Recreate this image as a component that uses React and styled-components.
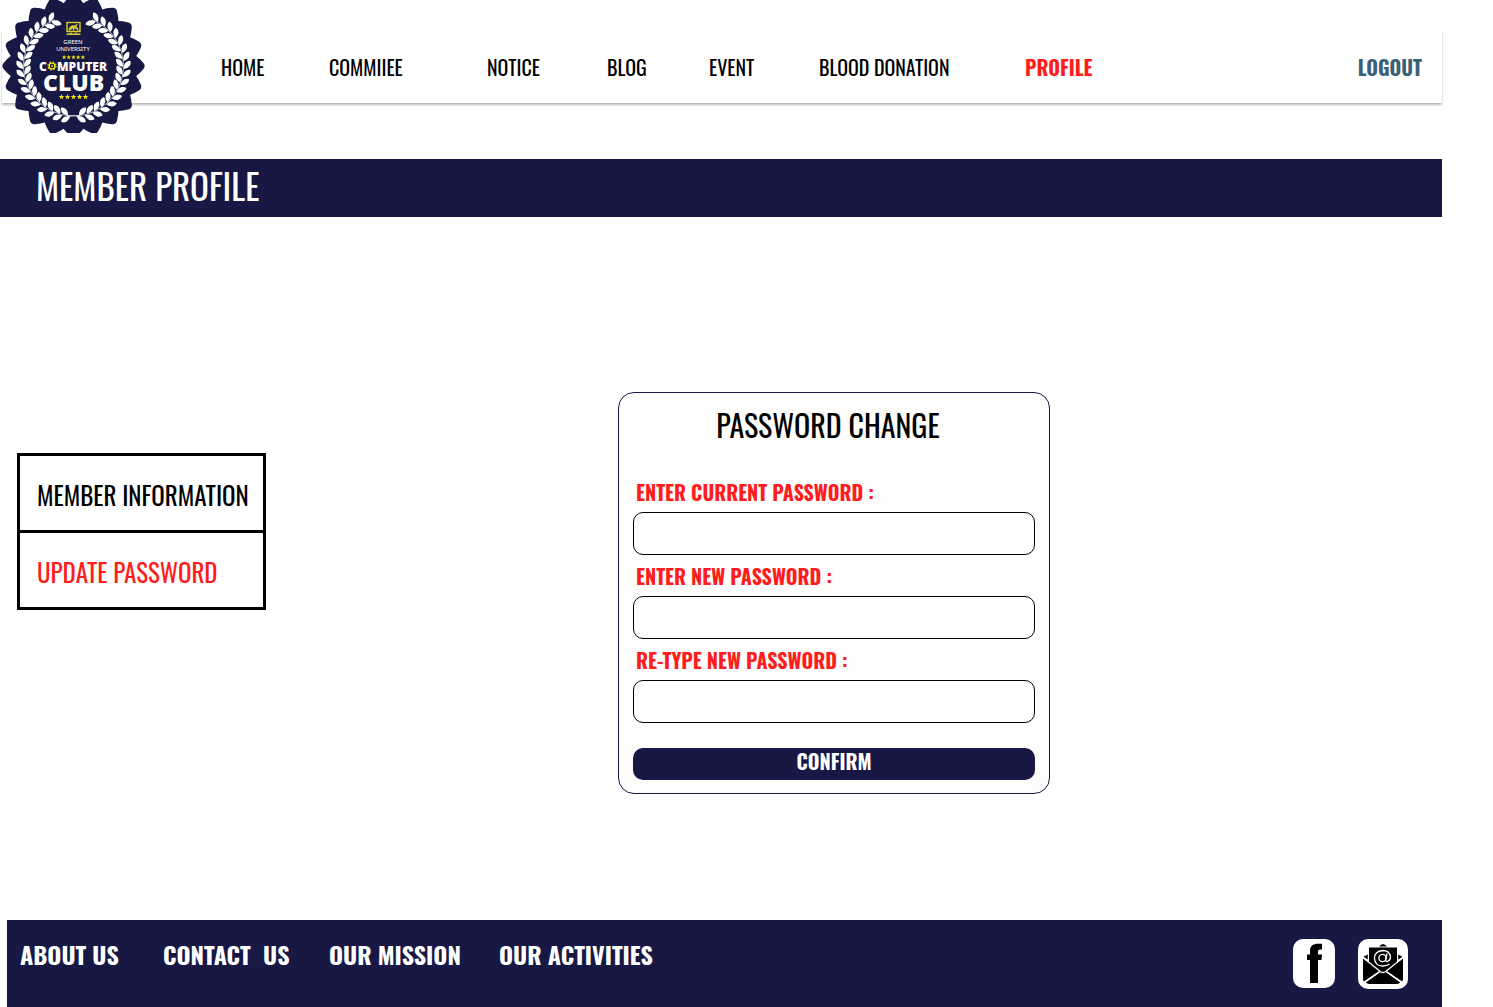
import React from "react";
import styled, { createGlobalStyle } from "styled-components";

const navy = "#171844";
const red = "#ff1c1c";

const GlobalStyle = createGlobalStyle`
  *, *::before, *::after { box-sizing: border-box; }
  body {
    margin: 0;
    background: #fff;
    color: #000;
    font-family: Oswald, "Roboto Condensed", sans-serif;
  }
`;

const Page = styled.div`
  display: flex;
  flex-direction: column;
  min-height: 100vh;
  padding: 29px 51px 0 0;
`;

const Header = styled.header`
  position: relative;
  display: flex;
  align-items: center;
  justify-content: space-between;
  height: 74px;
  margin-left: 2px;
  padding: 2px 20px 0 219px;
  box-shadow: 0 2px 2px rgba(0, 0, 0, 0.28);
`;

const LogoLink = styled.a`
  position: absolute;
  top: -29px;
  left: -2px;
  line-height: 0;
`;

const Nav = styled.nav`
  display: grid;
  grid-template-columns: 108px 158px 120px 102px 110px 206px auto;
`;

const NavLink = styled.a`
  color: ${(p) => p.$color || "#000"};
  font-size: 20px;
  font-weight: ${(p) => (p.$strong ? 700 : 400)};
  line-height: 30px;
  text-decoration: none;
  white-space: nowrap;
`;

const Banner = styled.h1`
  margin: 56px 0 0;
  padding: 0 36px 6px;
  background: ${navy};
  color: #fff;
  font-size: 35px;
  font-weight: 400;
  line-height: 52px;
`;

const Main = styled.main`
  display: grid;
  flex: 1;
  grid-template-columns: 249px minmax(0, 432px);
  column-gap: 352px;
  align-items: start;
  padding: 175px 0 126px 17px;
`;

const SideMenu = styled.nav`
  margin-top: 61px;
  border: 3px solid #000;
`;

const SideLink = styled.a`
  display: block;
  padding: 20px 0 16px 17px;
  color: ${(p) => (p.$active ? red : "#000")};
  font-size: 25px;
  font-weight: 400;
  line-height: 38px;
  text-decoration: none;
  white-space: nowrap;

  & + & {
    border-top: 3px solid #000;
  }
`;

const Card = styled.form`
  display: flex;
  flex-direction: column;
  padding: 10px 14px 13px;
  border: 1px solid ${navy};
  border-radius: 16px;
  background: #fffdfc;
`;

const CardTitle = styled.h2`
  margin: 0 0 30px;
  padding-right: 12px;
  font-size: 30px;
  font-weight: 400;
  line-height: 44px;
  text-align: center;
`;

const Fields = styled.div`
  display: grid;
  gap: 6px;
`;

const Field = styled.div`
  display: grid;
  gap: 5px;
`;

const Label = styled.label`
  padding-left: 3px;
  color: ${red};
  font-size: 20px;
  font-weight: 700;
  line-height: 30px;
`;

const Input = styled.input`
  width: 100%;
  height: 43px;
  padding: 0 12px;
  border: 1px solid #000;
  border-radius: 10px;
  background: #fff;
  font: inherit;
  font-size: 20px;
`;

const Confirm = styled.button`
  margin-top: 25px;
  padding: 0 0 6px;
  border: 0;
  border-radius: 10px;
  background: ${navy};
  color: #fff;
  font-family: inherit;
  font-size: 20px;
  font-weight: 700;
  line-height: 26px;
`;

const Footer = styled.footer`
  display: flex;
  align-items: flex-start;
  justify-content: space-between;
  height: 87px;
  margin-left: 7px;
  padding: 19px 34px 0 13px;
  background: ${navy};
`;

const FooterNav = styled.nav`
  display: grid;
  grid-template-columns: 143px 166px 170px auto;
`;

const FooterLink = styled.a`
  color: #fff;
  font-size: 24px;
  font-weight: 700;
  line-height: 30px;
  text-decoration: none;
  white-space: pre;
`;

const Social = styled.div`
  display: flex;
  gap: 23px;
`;

const SocialLink = styled.a`
  line-height: 0;
`;

const CX = 73.5;
const CY = 66;

function polar(r, deg) {
  const a = (deg * Math.PI) / 180;
  return [CX + r * Math.cos(a), CY + r * Math.sin(a)];
}

function sealPath() {
  const at = (r, deg) => polar(r, deg).map((n) => n.toFixed(2)).join(" ");
  let d = `M${at(63.5, -9)}`;
  for (let i = 0; i < 20; i += 1) {
    const c = i * 18;
    d += `Q${at(66.5, c - 6.5)} ${at(69.8, c - 2.6)}Q${at(72.6, c)} ${at(69.8, c + 2.6)}Q${at(66.5, c + 6.5)} ${at(63.5, c + 9)}`;
  }
  return `${d}Z`;
}

function Leaf({ r, deg, turn }) {
  const [x, y] = polar(r, deg);
  return (
    <path
      d="M-5 0Q-2-3 1.600-2.600 4.400-2 5.600 0 4 2.200 1 2.600-2 2.600-5 0Z"
      transform={`translate(${x.toFixed(2)} ${y.toFixed(2)}) rotate(${turn.toFixed(1)})`}
    />
  );
}

const leafSteps = Array.from({ length: 17 }, (_, i) => 82 - i * 9.2);

function Branch() {
  return (
    <g fill="#fff">
      {leafSteps.map((deg) => (
        <React.Fragment key={deg}>
          <Leaf r={53.5} deg={deg} turn={deg - 50} />
          <Leaf r={46.5} deg={deg - 3} turn={deg - 130} />
        </React.Fragment>
      ))}
      <path
        d={`M${polar(50, 97).join(" ")}A50 50 0 0 0 ${polar(50, -68).join(" ")}`}
        fill="none"
        stroke="#fff"
        strokeWidth="0.7"
      />
    </g>
  );
}

function StarRow({ y, r, gap }) {
  const pts = Array.from({ length: 10 }, (_, i) => {
    const a = ((i * 36 - 90) * Math.PI) / 180;
    const q = i % 2 ? r * 0.42 : r;
    return `${(q * Math.cos(a)).toFixed(2)},${(q * Math.sin(a)).toFixed(2)}`;
  }).join(" ");
  return (
    <g fill="#f2e416">
      {[-2, -1, 0, 1, 2].map((n) => (
        <polygon key={n} points={pts} transform={`translate(${CX + n * gap} ${y})`} />
      ))}
    </g>
  );
}

function Logo() {
  return (
    <svg width="150" height="133" viewBox="0 0 150 133" role="img" aria-label="Green University Computer Club">
      <path d={sealPath()} fill={navy} />
      <Branch />
      <g transform="translate(147 0) scale(-1 1)">
        <Branch />
      </g>
      <g fill="none" stroke="#d8cf2b" strokeWidth="1.4">
        <rect x="67" y="22.5" width="13" height="9" />
        <path d="M66.5 34.2H80.5M71 32.5V34M76 32.5V34" />
        <path d="M69 30.5Q70 26 73.5 26T78 30.5M71 30V28.5L73.5 27 76 29M73.5 30.5V28M75 26L77.5 24.5" />
      </g>
      <g fill="#fff" textAnchor="middle" fontFamily='"Noto Sans", sans-serif' fontSize="6">
        <text x="73" y="44">GREEN</text>
        <text x="73" y="51">UNIVERSITY</text>
      </g>
      <text fill="#fff" fontFamily='"Open Sans", sans-serif' fontSize="12" fontWeight="800">
        <tspan x="39" y="71">C</tspan>
        <tspan x="57" y="71">MPUTER</tspan>
        <tspan x="43" y="91" fontSize="23">CLUB</tspan>
      </text>
      <circle cx="52" cy="66" r="2.9" fill="none" stroke="#f2e416" strokeWidth="1.4" />
      <circle cx="52" cy="66" r="4" fill="none" stroke="#f2e416" strokeWidth="1.2" strokeDasharray="1.6 1.54" />
      <circle cx="52" cy="66" r="0.9" fill="#f2e416" />
      <StarRow y={57.2} r={2.4} gap={4.7} />
      <StarRow y={97} r={2.9} gap={6} />
    </svg>
  );
}

function FacebookIcon() {
  return (
    <svg width="42" height="50" viewBox="0 0 42 50" aria-hidden="true">
      <rect y="0" width="42" height="49" rx="10" fill="#fff" />
      <path d="M17 44V21H14V15.500H17V12C17 7 20 4.800 25 4.800H29V10.500H27Q25 10.500 25 12.500V15.500H29L28.500 21H25V44Z" fill="#000" />
    </svg>
  );
}

function MailIcon() {
  return (
    <svg width="50" height="50" viewBox="0 0 50 50" aria-hidden="true">
      <rect width="50" height="50" rx="10" fill="#fff" />
      <path d="M21 7.500Q25 2.500 29 7.500Z" />
      <path d="M11 8.500H39V25L27.500 34Q25 35.500 22.500 34L11 25Z" />
      <path d="M5 19.500L21.500 32.200 6 42.500Q5 41.500 5 40ZM45 19.500L28.500 32.200 44 42.500Q45 41.500 45 40Z" />
      <path d="M7.800 43.600L22.300 33.200Q25 35.800 27.700 33.200L42.200 43.600Q41 45 39 45H11Q9 45 7.800 43.600Z" />
      <path d="M9.800 15.500V20.500L5.500 17.800ZM40.200 15.500V20.500L44.500 17.800Z" />
      <g fill="none" stroke="#fff" strokeWidth="1.300">
        <path d="M5 18.500L22.300 32.500Q25 34.500 27.700 32.500L45 18.500" />
        <path d="M21.500 32.500L6.500 43M28.500 32.500L43.500 43" />
        <circle cx="24.500" cy="19" r="3.600" />
        <path d="M29 14.500L27.800 20.500Q27.500 22.800 29.500 22.500 32.500 21.500 32.500 17.800 31.500 11.500 25 11.500 16.500 12 16.500 19.500 17 26.800 24.500 27 29 27 31.500 25" />
      </g>
    </svg>
  );
}

const navItems = ["HOME", "COMMIIEE", "NOTICE", "BLOG", "EVENT", "BLOOD DONATION"];
const footerItems = ["ABOUT US", "CONTACT  US", "OUR MISSION", "OUR ACTIVITIES"];
const fields = [
  { id: "current-password", label: "ENTER CURRENT PASSWORD :" },
  { id: "new-password", label: "ENTER NEW PASSWORD :" },
  { id: "retype-password", label: "RE-TYPE NEW PASSWORD :" },
];

export default function App() {
  return (
    <>
      <GlobalStyle />
      <Page>
        <Header>
          <LogoLink href="#home">
            <Logo />
          </LogoLink>
          <Nav>
            {navItems.map((item) => (
              <NavLink key={item} href="#">{item}</NavLink>
            ))}
            <NavLink href="#" $strong $color={red}>PROFILE</NavLink>
          </Nav>
          <NavLink href="#" $strong $color="#3b6075">LOGOUT</NavLink>
        </Header>
        <Banner>MEMBER PROFILE</Banner>
        <Main>
          <SideMenu>
            <SideLink href="#">MEMBER INFORMATION</SideLink>
            <SideLink href="#" $active>UPDATE PASSWORD</SideLink>
          </SideMenu>
          <Card onSubmit={(e) => e.preventDefault()}>
            <CardTitle>PASSWORD CHANGE</CardTitle>
            <Fields>
              {fields.map((f) => (
                <Field key={f.id}>
                  <Label htmlFor={f.id}>{f.label}</Label>
                  <Input id={f.id} type="password" />
                </Field>
              ))}
            </Fields>
            <Confirm type="submit">CONFIRM</Confirm>
          </Card>
        </Main>
        <Footer>
          <FooterNav>
            {footerItems.map((item) => (
              <FooterLink key={item} href="#">{item}</FooterLink>
            ))}
          </FooterNav>
          <Social>
            <SocialLink href="#" aria-label="Facebook"><FacebookIcon /></SocialLink>
            <SocialLink href="#" aria-label="Email"><MailIcon /></SocialLink>
          </Social>
        </Footer>
      </Page>
    </>
  );
}
